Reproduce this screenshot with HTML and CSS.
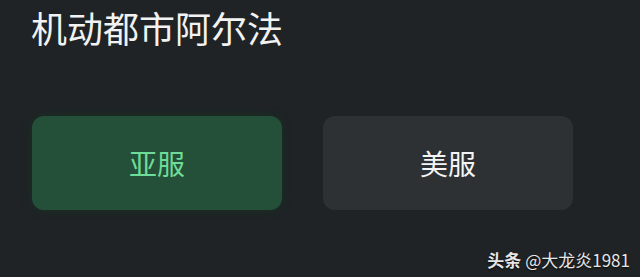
FILE: index.html
```html
<!DOCTYPE html>
<html lang="zh-CN">
<head>
    <meta charset="UTF-8">
    <meta name="viewport" content="width=device-width, initial-scale=1.0">
    <title>机动都市阿尔法</title>
    <link rel="stylesheet" href="styles.css">
</head>
<body>
    <h1 class="title">机动都市阿尔法</h1>
    <div class="servers">
        <button class="server active">亚服</button>
        <button class="server">美服</button>
    </div>
    <div class="watermark"><b>头条</b> @大龙炎1981</div>
</body>
</html>
```

FILE: styles.css
```css
html, body {
    height: 100%;
}
body {
    margin: 0;
    background: #1f2325;
    font-family: 'Noto Sans CJK SC', 'Noto Sans', sans-serif;
    color: #fff;
    position: relative;
    overflow: hidden;
}
.title {
    margin: 0;
    padding: 4px 0 0 31px;
    font-size: 36px;
    font-weight: 400;
    line-height: 46px;
    color: #f2f2f2;
}
.servers {
    display: flex;
    gap: 41px;
    padding: 66px 0 0 32px;
}
.server {
    width: 250px;
    height: 94px;
    border: none;
    border-radius: 12px;
    background: #2d3134;
    color: #f4f4f4;
    font-family: inherit;
    font-size: 28px;
    cursor: pointer;
}
.server.active {
    background: #245039;
    color: #6edb96;
    box-shadow: 0 0 8px rgba(20, 60, 40, 0.6);
}
.watermark {
    position: absolute;
    right: 10px;
    bottom: 5px;
    font-size: 17px;
    color: #e6e6e6;
    text-shadow: 0 1px 2px rgba(0, 0, 0, 0.8);
}
```
